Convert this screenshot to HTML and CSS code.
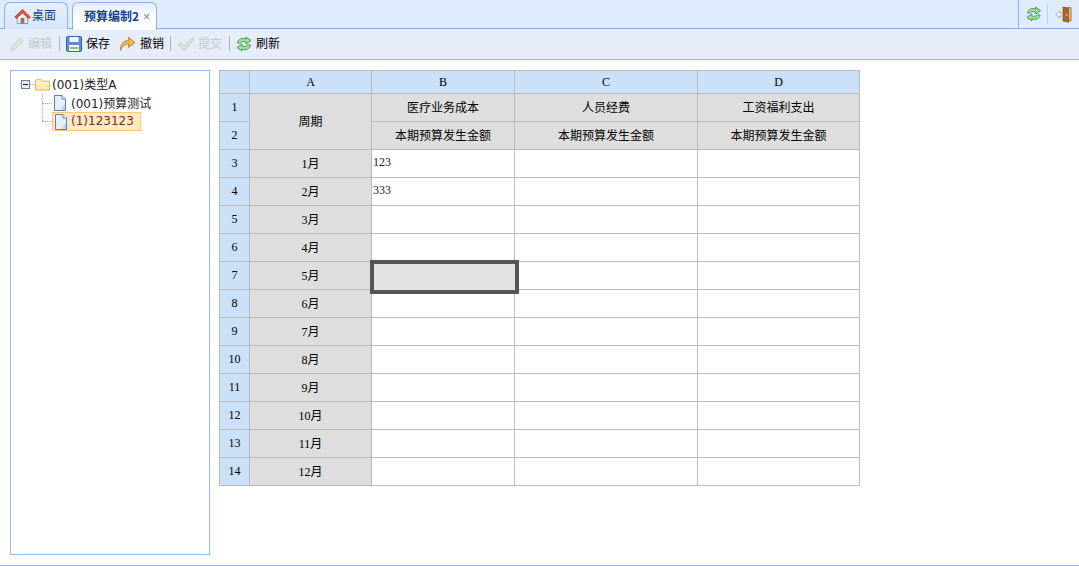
FILE: index.html
```html
<!DOCTYPE html>
<html lang="zh">
<head>
<meta charset="utf-8">
<title>预算编制</title>
<link rel="stylesheet" href="styles.css">
</head>
<body>
<svg class="defs" width="0" height="0">
  <defs>
    <symbol id="i-refresh" viewBox="0 0 16 16">
      <path d="M1.500 7C2 3 6 1.500 10 3V1L15 4.500 10 8V6C7.500 5.200 5.500 5.500 4.500 7Z" fill="#9fe09f" stroke="#3f8f4a" stroke-width=".9" stroke-linejoin="round"/>
      <path d="M14.500 9C14 13 10 14.500 6 13V15L1 11.500 6 8V10C8.500 10.800 10.500 10.500 11.500 9Z" fill="#9fe09f" stroke="#3f8f4a" stroke-width=".9" stroke-linejoin="round"/>
    </symbol>
    <symbol id="i-doc" viewBox="0 0 16 16">
      <path d="M2.500 .5H10L13.500 4V15.500H2.500Z" fill="#e6effb" stroke="#5f7fb5"/>
      <path d="M10 .5V4H13.500" fill="#fff" stroke="#5f7fb5"/>
      <path d="M9 14.800 12.800 9V14.800Z" fill="#b5cdf0"/>
    </symbol>
    <symbol id="i-check" viewBox="0 0 18 16">
      <path d="M1 8.500 4 6.500 7 10 15.500 1.500 17 3 7 15Z" fill="#d6e6d8" stroke="#bcd2c0" stroke-linejoin="round"/>
    </symbol>
  </defs>
</svg>
<header class="tabbar">
  <nav class="tabs">
    <div class="tab">
      <svg class="icon-house" width="17" height="17" viewBox="0 0 18 17">
        <path d="M3.500 8V16H14.500V8L9 3Z" fill="#f4efe6" stroke="#9a8a78"/>
        <rect x="7" y="10" width="4" height="6" fill="#7d7a78"/>
        <path d="M.8 9 9 1 17.200 9 15.400 10.500 9 4.500 2.600 10.500Z" fill="#e2553b" stroke="#a8301f" stroke-width=".8" stroke-linejoin="round"/>
      </svg>
      <span class="tab-label">桌面</span>
    </div>
    <div class="tab tab-active">
      <span class="tab-label">预算编制2</span>
      <span class="tab-close">×</span>
    </div>
  </nav>
  <div class="tabbar-tools">
    <svg class="tool-refresh" width="16" height="16"><use href="#i-refresh"/></svg>
    <span class="tools-sep"></span>
    <svg width="18" height="17" viewBox="0 0 18 17">
      <path d="M.8 8.500 5 4.800V7H8V10H5V12.200Z" fill="#f6f6f6" stroke="#a0a0a0" stroke-width=".8"/>
      <path d="M7.500 1.500H16.500V15H7.500" fill="#e8c9a0" stroke="#a56a34"/>
      <path d="M8.500 1 14 2.500V16.500L8.500 15Z" fill="#a9652c" stroke="#774517" stroke-width=".7"/>
      <rect x="11.500" y="8" width="1.200" height="2" fill="#f2d28a"/>
    </svg>
  </div>
</header>
<div class="toolbar">
  <button class="tool tool-off">
    <svg width="16" height="16" viewBox="0 0 16 16">
      <path d="M1.500 14.500 3 10 11.500 1.500 14.500 4.500 6 13Z" fill="#d9e6d8" stroke="#c5d4c5" stroke-linejoin="round"/>
    </svg>
    <span class="tool-label">编辑</span>
  </button>
  <span class="tool-sep"></span>
  <button class="tool">
    <svg width="16" height="16" viewBox="0 0 16 16">
      <rect x=".5" y=".5" width="15" height="15" rx="1.500" fill="#5d8fd0" stroke="#3d659f"/>
      <rect x="3.500" y="1" width="9" height="5" fill="#eef4fb"/>
      <rect x="3" y="9" width="10" height="6" fill="#f5f7f5"/>
      <rect x="4" y="11" width="8" height="2" fill="#8cc06d"/>
    </svg>
    <span class="tool-label">保存</span>
  </button>
  <button class="tool">
    <svg width="17" height="17" viewBox="0 0 17 17">
      <path d="M1.500 15.500C1 9.500 4.500 5.500 9.500 5.500V2L16 7.500 9.500 12.500V9C6.500 9 3.500 11 1.500 15.500Z" fill="#f4b64a" stroke="#a77a3a" stroke-width=".8" stroke-linejoin="round"/>
    </svg>
    <span class="tool-label">撤销</span>
  </button>
  <span class="tool-sep"></span>
  <button class="tool tool-off">
    <svg width="18" height="16"><use href="#i-check"/></svg>
    <span class="tool-label">提交</span>
  </button>
  <span class="tool-sep"></span>
  <button class="tool">
    <svg width="16" height="16"><use href="#i-refresh"/></svg>
    <span class="tool-label">刷新</span>
  </button>
</div>
<main class="content">
  <aside class="tree">
    <div class="tree-root">
      <span class="tree-expander"></span>
      <span class="tree-dash"></span>
      <svg class="tree-folder" width="15" height="13" viewBox="0 0 16 13">
        <path d="M.5 12.500V2.500L1.500 1H6L7.500 3H15.500V12.500Z" fill="#ffeeb0" stroke="#d9b356"/>
        <path d="M1 5H15" stroke="#fff8dc" stroke-width="2"/>
      </svg>
      <span class="tree-label">(001)类型A</span>
    </div>
    <div class="tree-children">
      <div class="tree-leaf">
        <svg width="16" height="16"><use href="#i-doc"/></svg>
        <span class="tree-label">(001)预算测试</span>
      </div>
      <div class="tree-leaf tree-leaf-selected">
        <svg width="16" height="16"><use href="#i-doc"/></svg>
        <span class="tree-label">(1)123123</span>
      </div>
    </div>
  </aside>
  <table class="sheet">
    <colgroup>
      <col class="col-index"><col class="col-a"><col class="col-b"><col class="col-c"><col class="col-d">
    </colgroup>
    <thead>
      <tr><th></th><th>A</th><th>B</th><th>C</th><th>D</th></tr>
    </thead>
    <tbody>
      <tr><th>1</th><td class="fixed" rowspan="2">周期</td><td class="fixed">医疗业务成本</td><td class="fixed">人员经费</td><td class="fixed">工资福利支出</td></tr>
      <tr><th>2</th><td class="fixed">本期预算发生金额</td><td class="fixed">本期预算发生金额</td><td class="fixed">本期预算发生金额</td></tr>
      <tr><th>3</th><td class="fixed">1月</td><td class="value">123</td><td></td><td></td></tr>
      <tr><th>4</th><td class="fixed">2月</td><td class="value">333</td><td></td><td></td></tr>
      <tr><th>5</th><td class="fixed">3月</td><td></td><td></td><td></td></tr>
      <tr><th>6</th><td class="fixed">4月</td><td></td><td></td><td></td></tr>
      <tr><th>7</th><td class="fixed">5月</td><td class="active-cell"><span class="cell-cursor"></span></td><td></td><td></td></tr>
      <tr><th>8</th><td class="fixed">6月</td><td></td><td></td><td></td></tr>
      <tr><th>9</th><td class="fixed">7月</td><td></td><td></td><td></td></tr>
      <tr><th>10</th><td class="fixed">8月</td><td></td><td></td><td></td></tr>
      <tr><th>11</th><td class="fixed">9月</td><td></td><td></td><td></td></tr>
      <tr><th>12</th><td class="fixed">10月</td><td></td><td></td><td></td></tr>
      <tr><th>13</th><td class="fixed">11月</td><td></td><td></td><td></td></tr>
      <tr><th>14</th><td class="fixed">12月</td><td></td><td></td><td></td></tr>
    </tbody>
  </table>
</main>
</body>
</html>
```

FILE: styles.css
```css
* { box-sizing: border-box; }

html, body { height: 100%; }

body {
  margin: 0;
  height: 566px;
  overflow: hidden;
  display: flex;
  flex-direction: column;
  background: #fff;
  border-bottom: 1px solid #99bbe8;
  font-family: "Liberation Serif", "Noto Sans CJK SC", serif;
  font-size: 12px;
  color: #000;
}

.defs { position: absolute; }

.tabbar {
  height: 29px;
  flex: none;
  display: flex;
  justify-content: space-between;
  background: #deecfd;
  border-bottom: 1px solid #8db2e3;
}

.tabs {
  display: flex;
  gap: 4px;
  padding: 2px 0 0 4px;
}

.tab {
  height: 27px;
  display: flex;
  align-items: center;
  gap: 1px;
  padding: 0 9px;
  width: 64px;
  border: 1px solid #8db2e3;
  border-bottom: 0;
  border-radius: 6px 6px 0 0;
  background: linear-gradient(#e6f0fd, #d6e6fb);
  color: #15428b;
  font-family: "Noto Sans CJK SC", sans-serif;
}

.tab-label { padding-bottom: 3px; }

.tab-active {
  width: 85px;
  padding-left: 11px;
  gap: 4px;
  background: linear-gradient(#e3eefc, #fff 60%);
  font-weight: 700;
  white-space: nowrap;
  position: relative;
  height: 28px;
}

.tab-close {
  font-family: "Liberation Sans", sans-serif;
  font-weight: 400;
  color: #5a7fb8;
  font-size: 12px;
}

.tabbar-tools {
  width: 61px;
  display: flex;
  align-items: center;
  padding: 0 7px 0 7px;
  border-left: 1px solid #8db2e3;
}

.tool-refresh { margin-right: 5px; }

.tools-sep {
  width: 1px;
  height: 20px;
  margin-right: 7px;
  background: #c3cfdf;
}

.toolbar {
  height: 31px;
  flex: none;
  display: flex;
  align-items: center;
  padding: 0 0 1px 9px;
  background: #e5edf8;
  border-bottom: 1px solid #99bbe8;
}

.tool {
  display: flex;
  align-items: center;
  gap: 4px;
  padding: 0;
  margin-right: 9px;
  border: 0;
  background: none;
  font-family: "Noto Sans CJK SC", sans-serif;
  font-size: 12px;
  color: #000;
}

.tool-label { padding-bottom: 2px; }

.tool-off {
  gap: 3px;
  margin-right: 10px;
  color: #c6c9ce;
}

.tool-sep {
  width: 1px;
  height: 15px;
  margin: 0 6px 0 -3px;
  background: #aab4c2;
}

.content {
  flex: 1;
  min-height: 0;
  display: flex;
  gap: 9px;
  padding: 10px 0 10px 10px;
  align-items: flex-start;
}

.tree {
  width: 200px;
  height: 485px;
  flex: none;
  padding: 4px 0 0 10px;
  border: 1px solid #99bbe8;
  font-family: "DejaVu Sans", "Noto Sans CJK SC", sans-serif;
  font-size: 12px;
  color: #222;
}

.tree-label { padding-bottom: 2px; white-space: nowrap; }

.tree-root {
  height: 19px;
  display: flex;
  align-items: center;
}

.tree-expander {
  width: 9px;
  height: 9px;
  flex: none;
  position: relative;
  border: 1px solid #6f8199;
  background: #e6ebf2;
}

.tree-expander::after {
  content: "";
  position: absolute;
  left: 1px;
  top: 3px;
  width: 5px;
  height: 1px;
  background: #222;
}

.tree-dash {
  width: 5px;
  height: 0;
  flex: none;
  border-top: 1px dotted #aaa;
}

.tree-folder { flex: none; margin-right: 2px; }

.tree-children {
  margin-left: 21px;
  padding-left: 10px;
  background:
    repeating-linear-gradient(#aaa 0 1px, transparent 1px 2px) 0 0 / 1px 28px no-repeat;
}

.tree-leaf {
  display: flex;
  align-items: center;
  gap: 3px;
  height: 18px;
  width: fit-content;
  position: relative;
}

.tree-leaf::before {
  content: "";
  position: absolute;
  left: -10px;
  top: 9px;
  width: 10px;
  border-top: 1px dotted #aaa;
}

.tree-leaf svg { flex: none; }

.tree-leaf-selected {
  width: 89px;
  height: 19px;
  gap: 2px;
  background: #ffe9c0;
  border: 1px solid #ffc973;
  color: #7a2a3a;
}

.tree-leaf-selected::before { left: -11px; top: 8px; }

.sheet {
  table-layout: fixed;
  width: 640px;
  flex: none;
  border-collapse: collapse;
  font-family: "Liberation Serif", "Noto Sans CJK SC", serif;
  font-size: 12px;
}

.col-index { width: 30px; }
.col-a { width: 122px; }
.col-b { width: 143px; }
.col-c { width: 183px; }
.col-d { width: 162px; }

.sheet th,
.sheet td {
  height: 28px;
  padding: 0;
  border: 1px solid #bbb;
  text-align: center;
  font-weight: 400;
}

.sheet td { padding-bottom: 2px; }

.sheet thead th { height: 23px; }

.sheet th { background: #cbe1fa; }

.sheet .fixed { background: #dedede; }

.sheet .value {
  text-align: left;
  padding-left: 1px;
  color: #222;
}

.active-cell { position: relative; }

.cell-cursor {
  position: absolute;
  left: -2px;
  right: -5px;
  top: -2px;
  bottom: -5px;
  border: 4px solid #555;
  background: #e3e3e3;
}
```
